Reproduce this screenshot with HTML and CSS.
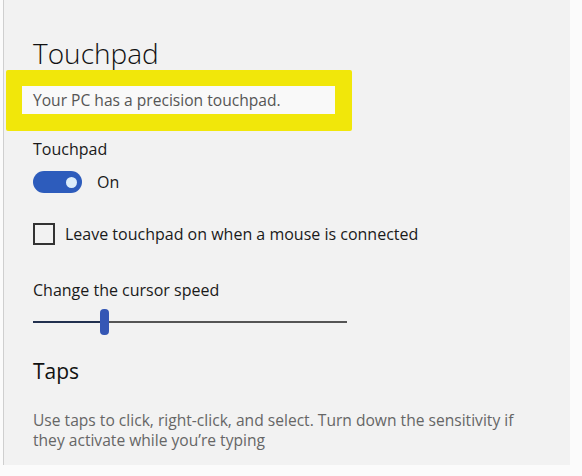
FILE: index.html
```html
<!DOCTYPE html>
<html lang="en">
<head>
<meta charset="utf-8">
<title>Touchpad</title>
<link rel="stylesheet" href="styles.css">
</head>
<body>
<main class="panel">
  <h1 class="title">Touchpad</h1>
  <div class="highlight">
    <div class="note">Your PC has a precision touchpad.</div>
  </div>
  <div class="label label-touchpad">Touchpad</div>
  <div class="toggle-row">
    <span class="toggle"><span class="knob"></span></span>
    <span class="toggle-text">On</span>
  </div>
  <label class="check-row">
    <span class="checkbox"></span>
    <span class="check-text">Leave touchpad on when a mouse is connected</span>
  </label>
  <div class="label label-speed">Change the cursor speed</div>
  <div class="slider">
    <span class="fill"></span>
    <span class="thumb"></span>
    <span class="rest"></span>
  </div>
  <h2 class="section">Taps</h2>
  <p class="desc">Use taps to click, right-click, and select. Turn down the sensitivity if they activate while you’re typing</p>
</main>
</body>
</html>
```

FILE: styles.css
```css
html, body {
  margin: 0;
  padding: 0;
  background: #fbfbfb;
}

body {
  font-family: "Open Sans", "Noto Sans", "DejaVu Sans", sans-serif;
  color: #1a1a1a;
}

.panel {
  box-sizing: border-box;
  margin-left: 3px;
  width: 567px;
  height: 465px;
  background: #f2f2f2;
  border-left: 1px solid #cfcfcf;
  padding: 36px 0 0 29px;
  display: flex;
  flex-direction: column;
  align-items: flex-start;
}

.title {
  margin: 0;
  font-size: 28px;
  line-height: 34px;
  font-weight: 300;
  color: #111;
}

.highlight {
  margin-left: -27px;
  width: 313px;
  border: 16px solid #f1e70a;
  border-right-width: 17px;
  border-bottom-width: 17px;
  border-radius: 2px;
}

.note {
  height: 28px;
  line-height: 28px;
  background: #f9f9f9;
  padding-left: 11px;
  font-size: 15.6px;
  color: #555;
}

.label {
  font-size: 16px;
  line-height: 22px;
  color: #1a1a1a;
}

.label-touchpad {
  margin-top: 7px;
}

.toggle-row {
  margin-top: 11px;
  display: flex;
  align-items: center;
  gap: 15px;
}

.toggle {
  box-sizing: border-box;
  width: 49px;
  height: 22px;
  border-radius: 11px;
  background: #2d5cbc;
  display: flex;
  align-items: center;
  justify-content: flex-end;
  padding-right: 5px;
}

.knob {
  width: 11px;
  height: 11px;
  border-radius: 50%;
  background: #dcedfa;
}

.toggle-text {
  font-size: 16px;
  line-height: 22px;
}

.check-row {
  margin-top: 30px;
  display: flex;
  align-items: center;
  gap: 10px;
}

.checkbox {
  box-sizing: border-box;
  width: 22px;
  height: 22px;
  border: 2px solid #333;
}

.check-text {
  font-size: 16px;
  line-height: 22px;
}

.label-speed {
  margin-top: 34px;
}

.slider {
  margin-top: 8px;
  width: 314px;
  height: 26px;
  display: flex;
  align-items: center;
}

.fill {
  width: 67px;
  height: 2px;
  background: #22314f;
}

.thumb {
  width: 9px;
  height: 26px;
  border-radius: 4px;
  background: #3557b5;
}

.rest {
  flex: 1;
  height: 2px;
  background: #555;
}

.section {
  margin: 22px 0 0;
  font-size: 21px;
  line-height: 28px;
  font-weight: 400;
  color: #111;
}

.desc {
  margin: 25px 0 0;
  width: 512px;
  font-size: 15.6px;
  line-height: 20px;
  color: #666;
}
```
